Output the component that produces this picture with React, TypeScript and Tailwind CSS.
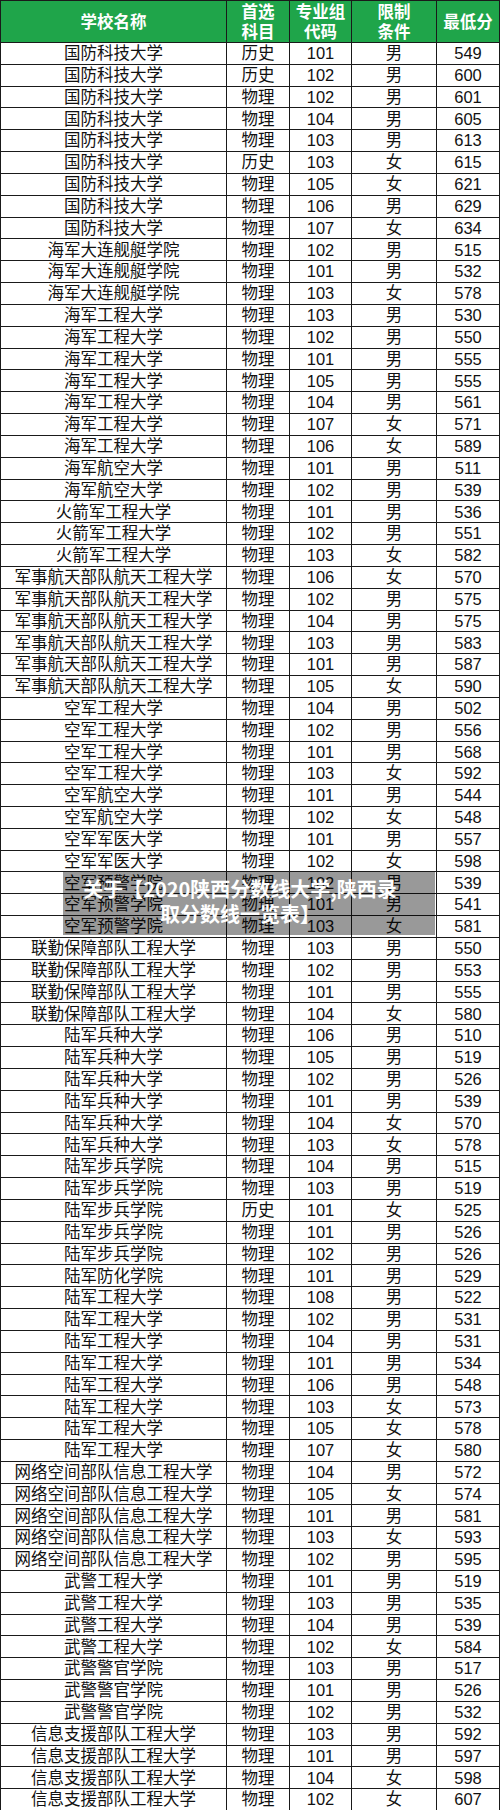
import React from "react";

const raw = `国防科技大学,历史,101,男,549
国防科技大学,历史,102,男,600
国防科技大学,物理,102,男,601
国防科技大学,物理,104,男,605
国防科技大学,物理,103,男,613
国防科技大学,历史,103,女,615
国防科技大学,物理,105,女,621
国防科技大学,物理,106,男,629
国防科技大学,物理,107,女,634
海军大连舰艇学院,物理,102,男,515
海军大连舰艇学院,物理,101,男,532
海军大连舰艇学院,物理,103,女,578
海军工程大学,物理,103,男,530
海军工程大学,物理,102,男,550
海军工程大学,物理,101,男,555
海军工程大学,物理,105,男,555
海军工程大学,物理,104,男,561
海军工程大学,物理,107,女,571
海军工程大学,物理,106,女,589
海军航空大学,物理,101,男,511
海军航空大学,物理,102,男,539
火箭军工程大学,物理,101,男,536
火箭军工程大学,物理,102,男,551
火箭军工程大学,物理,103,女,582
军事航天部队航天工程大学,物理,106,女,570
军事航天部队航天工程大学,物理,102,男,575
军事航天部队航天工程大学,物理,104,男,575
军事航天部队航天工程大学,物理,103,男,583
军事航天部队航天工程大学,物理,101,男,587
军事航天部队航天工程大学,物理,105,女,590
空军工程大学,物理,104,男,502
空军工程大学,物理,102,男,556
空军工程大学,物理,101,男,568
空军工程大学,物理,103,女,592
空军航空大学,物理,101,男,544
空军航空大学,物理,102,女,548
空军军医大学,物理,101,男,557
空军军医大学,物理,102,女,598
空军预警学院,物理,102,男,539
空军预警学院,物理,101,男,541
空军预警学院,物理,103,女,581
联勤保障部队工程大学,物理,103,男,550
联勤保障部队工程大学,物理,102,男,553
联勤保障部队工程大学,物理,101,男,555
联勤保障部队工程大学,物理,104,女,580
陆军兵种大学,物理,106,男,510
陆军兵种大学,物理,105,男,519
陆军兵种大学,物理,102,男,526
陆军兵种大学,物理,101,男,539
陆军兵种大学,物理,104,女,570
陆军兵种大学,物理,103,女,578
陆军步兵学院,物理,104,男,515
陆军步兵学院,物理,103,男,519
陆军步兵学院,历史,101,女,525
陆军步兵学院,物理,101,男,526
陆军步兵学院,物理,102,男,526
陆军防化学院,物理,101,男,529
陆军工程大学,物理,108,男,522
陆军工程大学,物理,102,男,531
陆军工程大学,物理,104,男,531
陆军工程大学,物理,101,男,534
陆军工程大学,物理,106,男,548
陆军工程大学,物理,103,女,573
陆军工程大学,物理,105,女,578
陆军工程大学,物理,107,女,580
网络空间部队信息工程大学,物理,104,男,572
网络空间部队信息工程大学,物理,105,女,574
网络空间部队信息工程大学,物理,101,男,581
网络空间部队信息工程大学,物理,103,女,593
网络空间部队信息工程大学,物理,102,男,595
武警工程大学,物理,101,男,519
武警工程大学,物理,103,男,535
武警工程大学,物理,104,男,539
武警工程大学,物理,102,女,584
武警警官学院,物理,103,男,517
武警警官学院,物理,101,男,526
武警警官学院,物理,102,男,532
信息支援部队工程大学,物理,103,男,592
信息支援部队工程大学,物理,101,男,597
信息支援部队工程大学,物理,104,女,598
信息支援部队工程大学,物理,102,女,607`;

const rows = raw.split("\n").map((l) => l.split(","));

const font = {
  fontFamily: '"Liberation Sans", "Noto Sans CJK SC", sans-serif',
};

const headers = [
  ["学校名称"],
  ["首选", "科目"],
  ["专业组", "代码"],
  ["限制", "条件"],
  ["最低分"],
];

export default function App() {
  return (
    <div className="relative w-[500px] h-[1810px] bg-white overflow-hidden" style={font}>
      <div className="border-l border-t border-[#1a1a1a]">
        <div className="grid grid-cols-[226px_63px_62px_85px_63px] h-[42px] bg-[#1fa54a]">
          {headers.map((h, i) => (
            <div
              key={i}
              className="flex flex-col items-center justify-center border-r border-b border-[#1a1a1a] text-white font-bold text-[16.5px] leading-[20px]"
            >
              {h.map((t) => (
                <span key={t}>{t}</span>
              ))}
            </div>
          ))}
        </div>
        {rows.map((r, ri) => (
          <div
            key={ri}
            className="grid grid-cols-[226px_63px_62px_85px_63px] h-[21.83px] text-[16.5px] text-[#111] leading-none"
          >
            {r.map((c, ci) => (
              <div
                key={ci}
                className="flex items-center justify-center border-r border-b border-[#1a1a1a] whitespace-nowrap"
              >
                {c}
              </div>
            ))}
          </div>
        ))}
      </div>
      <div className="absolute left-[63px] top-[872px] w-[372px] h-[63px] bg-black/40 pl-[12px] pr-[30px] pt-[4px] text-center text-white font-bold text-[20px] leading-[25px]"
        style={{ fontFamily: '"Noto Sans CJK SC", sans-serif' }}
      >
        <span className="whitespace-nowrap">关于【2020陕西分数线大学,陕西录</span>
        <br />
        <span className="whitespace-nowrap">取分数线一览表】</span>
      </div>
    </div>
  );
}
